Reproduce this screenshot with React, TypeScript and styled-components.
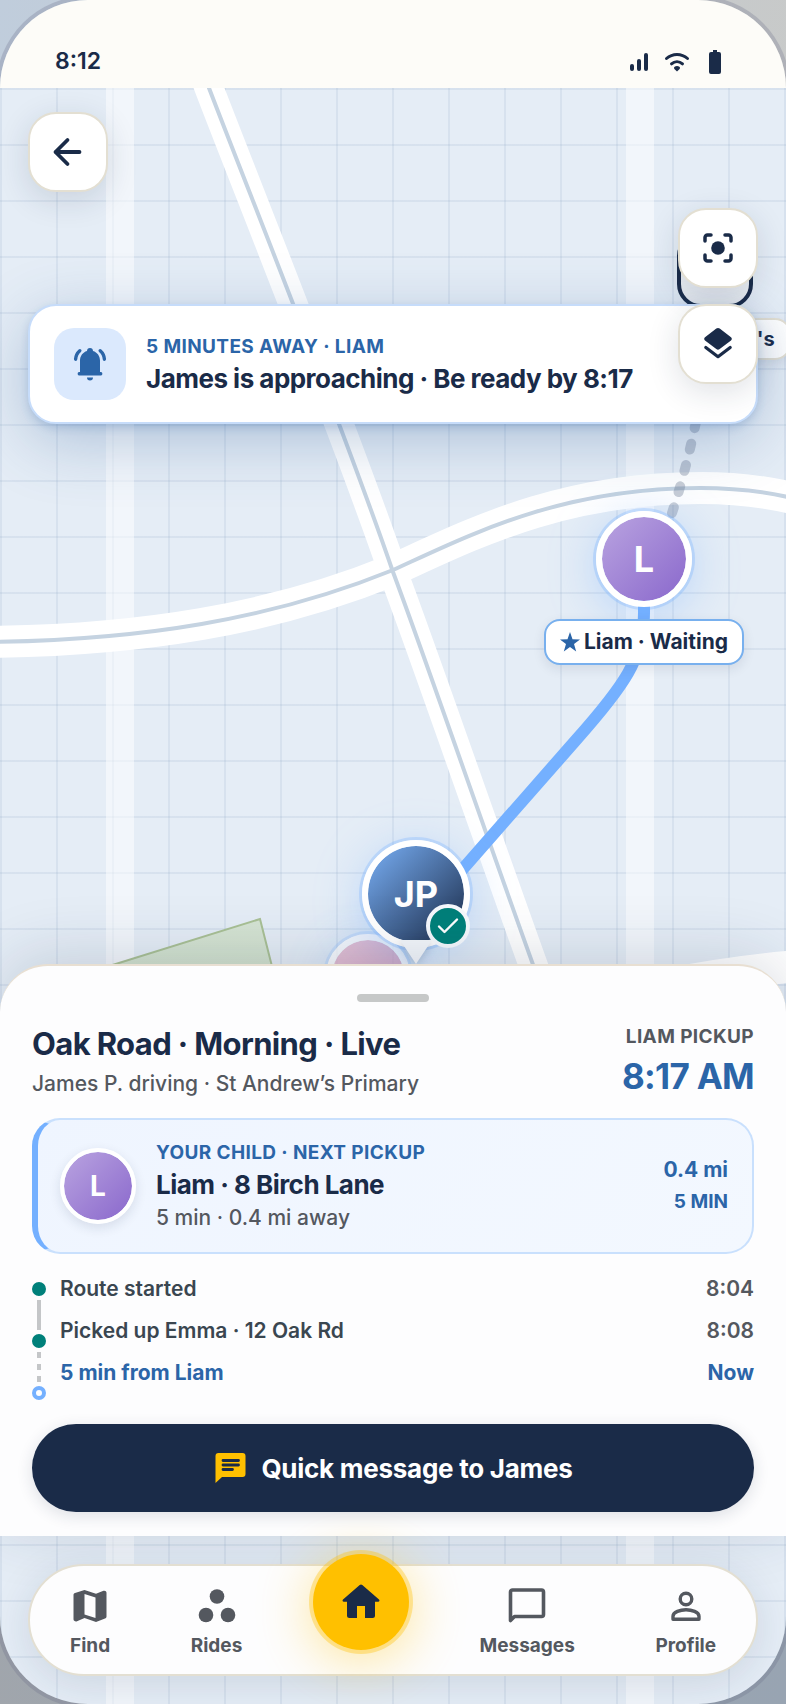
import type { ReactNode } from 'react';
import styled, { createGlobalStyle, css } from 'styled-components';

const NAVY = '#1a2b48';
const BLUE = '#2b65a8';
const SKY = '#74b0ff';
const GREY = '#54585f';
const TEAL = '#00807a';
const SAND = '#e3dfd2';

const GlobalStyle = createGlobalStyle`
  *, *::before, *::after {
    box-sizing: border-box;
  }
  body {
    margin: 0;
    font-family: Inter, 'Liberation Sans', sans-serif;
    color: ${NAVY};
    background: linear-gradient(100deg, #c0cddc 0%, #c9c9c6 100%) top / 100% 50% no-repeat,
      linear-gradient(100deg, #a3a6aa 0%, #98a4b2 100%);
  }
  button, a {
    font-family: inherit;
    color: inherit;
  }
  h1, h2, p, ul, ol {
    margin: 0;
    padding: 0;
  }
`;

const Phone = styled.div`
  display: flex;
  flex-direction: column;
  min-height: 100vh;
  overflow: hidden;
  border-radius: 88px;
  box-shadow: 0 0 0 4px rgba(100, 105, 130, 0.25);
`;

const StatusBar = styled.header`
  display: flex;
  align-items: center;
  justify-content: space-between;
  height: 88px;
  padding: 33px 57px 0 55px;
  background: #fdfcf8;
  font-size: 23px;
  font-weight: 600;
`;

const StatusIcons = styled.div`
  display: flex;
  gap: 10px;
`;

const MapArea = styled.main`
  position: relative;
  flex: 1;
  display: flex;
  flex-direction: column;
  overflow: hidden;
  background: #e5edf6;
`;

const MapCanvas = styled.div`
  position: absolute;
  inset: 0;
  background-image: linear-gradient(rgba(150, 175, 200, 0.18) 2px, transparent 2px),
    linear-gradient(90deg, rgba(150, 175, 200, 0.18) 2px, transparent 2px);
  background-size: 56px 56px;

  svg {
    display: block;
  }
`;

const Pin = styled.div<{ $x: number; $y: number; $size: number; $faded?: boolean }>`
  position: absolute;
  left: ${(p) => p.$x}px;
  top: ${(p) => p.$y}px;
  display: flex;
  align-items: center;
  justify-content: center;
  width: ${(p) => p.$size}px;
  height: ${(p) => p.$size}px;
  margin: ${(p) => -p.$size / 2}px;
  opacity: ${(p) => (p.$faded ? 0.7 : 1)};
`;

const tones = {
  violet: 'linear-gradient(135deg, #b9a3e0, #8a68cc)',
  driver: 'linear-gradient(135deg, #74a8ec 5%, #1a2b48 100%)',
  rose: 'linear-gradient(135deg, #e8b4cc, #c880a4)',
};

const Avatar = styled.div<{ $tone: keyof typeof tones; $size?: number; $live?: boolean }>`
  display: flex;
  flex: none;
  align-items: center;
  justify-content: center;
  width: ${(p) => p.$size ?? 76}px;
  height: ${(p) => p.$size ?? 76}px;
  border: ${(p) => (p.$live ? 6 : 4)}px solid #fff;
  border-radius: 50%;
  color: #fff;
  font-size: ${(p) => (p.$live ? 36 : 28)}px;
  font-weight: 700;
  background: ${(p) => tones[p.$tone]} padding-box;
  box-shadow: ${(p) =>
    p.$live
      ? '0 0 0 3px rgba(116, 176, 255, 0.3), 0 8px 48px rgba(116, 176, 255, 0.4)'
      : '0 4px 12px rgba(26, 43, 72, 0.12)'};
`;

const PinTail = styled.svg`
  position: absolute;
  top: 100px;
  filter: drop-shadow(0 2px 4px rgba(26, 43, 72, 0.2));
`;

const VerifiedBadge = styled.span`
  position: absolute;
  right: 0;
  bottom: 0;
  display: flex;
  align-items: center;
  justify-content: center;
  width: 44px;
  height: 44px;
  border: 4px solid #f6f9fd;
  border-radius: 50%;
  color: #fff;
  background: ${TEAL};
`;

const SchoolBox = styled.div`
  width: 76px;
  height: 76px;
  border: 4px solid ${NAVY};
  border-radius: 24px;
  background: #eef1f5;
`;

const PinLabel = styled.div<{ $top: number; $accent?: boolean }>`
  position: absolute;
  top: ${(p) => p.$top}px;
  display: flex;
  align-items: center;
  gap: 4px;
  padding: 0 14px;
  border: 2px solid ${(p) => (p.$accent ? '#78b0ee' : SAND)};
  border-radius: 16px;
  font-size: ${(p) => (p.$accent ? 21 : 20)}px;
  font-weight: 700;
  line-height: ${(p) => (p.$accent ? 42 : 38)}px;
  white-space: nowrap;
  background: #fff;
  box-shadow: 0 4px 12px rgba(26, 43, 72, 0.1);
`;

const MapButton = styled.button`
  display: flex;
  flex: none;
  align-items: center;
  justify-content: center;
  width: 80px;
  height: 80px;
  padding: 0;
  border: 2px solid ${SAND};
  border-radius: 28px;
  color: ${NAVY};
  background: #fff;
  box-shadow: 0 8px 32px rgba(26, 43, 72, 0.14);
  cursor: pointer;
`;

const TopBar = styled.div`
  position: relative;
  display: flex;
  padding: 24px 28px 0;
`;

const MapControls = styled.div`
  position: absolute;
  top: 120px;
  right: 28px;
  z-index: 2;
  display: flex;
  flex-direction: column;
  gap: 16px;
`;

const Alert = styled.section`
  position: relative;
  display: flex;
  align-items: center;
  gap: 20px;
  margin: 112px 28px auto;
  padding: 22px 24px;
  border: 2px solid #c6dcfa;
  border-radius: 28px;
  background: #fff;
  box-shadow: 0 4px 8px rgba(43, 101, 168, 0.2), 0 16px 64px rgba(43, 90, 150, 0.3);
`;

const AlertIcon = styled.div`
  display: flex;
  flex: none;
  align-items: center;
  justify-content: center;
  width: 72px;
  height: 72px;
  border-radius: 20px;
  color: ${BLUE};
  background: #dbe9fd;
`;

const Eyebrow = styled.p<{ $muted?: boolean }>`
  color: ${(p) => (p.$muted ? GREY : BLUE)};
  font-size: 19px;
  font-weight: 700;
  line-height: 30px;
  letter-spacing: 0.02em;
  text-transform: uppercase;
`;

const ItemTitle = styled.h2`
  font-size: 26px;
  font-weight: 700;
  line-height: 34px;
  letter-spacing: -0.02em;
`;

const Sheet = styled.section`
  position: relative;
  display: flex;
  flex-direction: column;
  padding: 28px 32px 24px;
  border-top: 2px solid #e8dfd2;
  border-radius: 48px 48px 0 0;
  background: #fdfdfe;
  box-shadow: 0 -8px 64px rgba(26, 43, 72, 0.16);
`;

const Handle = styled.div`
  align-self: center;
  width: 72px;
  height: 8px;
  border-radius: 4px;
  background: #c6c8c8;
`;

const SheetHeader = styled.div`
  display: flex;
  justify-content: space-between;
  margin-top: 20px;
`;

const RouteTitle = styled.h1`
  margin-bottom: 2px;
  font-size: 31px;
  font-weight: 700;
  line-height: 44px;
  letter-spacing: -0.02em;
`;

const Muted = styled.p`
  color: ${GREY};
  font-size: 21px;
  font-weight: 500;
  line-height: 32px;
`;

const Eta = styled.div`
  text-align: right;
`;

const EtaTime = styled.p`
  color: ${BLUE};
  font-size: 35px;
  font-weight: 700;
  line-height: 48px;
  letter-spacing: -0.02em;
`;

const ChildCard = styled.section`
  display: flex;
  align-items: center;
  gap: 20px;
  margin-top: 18px;
  padding: 18px 24px 18px 22px;
  border: 2px solid #c9e0fd;
  border-left: 6px solid ${SKY};
  border-radius: 28px;
  background: linear-gradient(135deg, #eff5ff, #f3f8ff);
`;

const ChildInfo = styled.div`
  flex: 1;
`;

const Distance = styled.p<{ $small?: boolean }>`
  color: ${BLUE};
  font-size: ${(p) => (p.$small ? 19 : 21)}px;
  font-weight: 700;
  line-height: 32px;
  text-align: right;
`;

const Progress = styled.div`
  display: flex;
  gap: 14px;
  margin-top: 14px;
`;

const Rail = styled.div`
  display: flex;
  flex-direction: column;
  align-items: center;
  gap: 4px;
  width: 14px;
  padding: 14px 0 8px;
`;

const Dot = styled.span<{ $next?: boolean }>`
  flex: none;
  width: 14px;
  height: 14px;
  border: ${(p) => (p.$next ? `4px solid ${SKY}` : `7px solid ${TEAL}`)};
  border-radius: 50%;
`;

const Segment = styled.span<{ $dashed?: boolean }>`
  flex: none;
  width: 4px;
  height: 30px;
  background: ${(p) =>
    p.$dashed
      ? 'repeating-linear-gradient(#c4c6c8 0 6px, transparent 6px 12px)'
      : '#c4c6c8'};
`;

const Steps = styled.ol`
  flex: 1;
  list-style: none;
`;

const Step = styled.li<{ $current?: boolean }>`
  display: flex;
  justify-content: space-between;
  color: #3a4650;
  font-size: 21px;
  font-weight: 600;
  line-height: 42px;

  time {
    color: ${GREY};
  }

  ${(p) =>
    p.$current &&
    css`
      &,
      time {
        color: ${BLUE};
        font-weight: 700;
      }
    `}
`;

const MessageButton = styled.button`
  display: flex;
  align-items: center;
  justify-content: center;
  gap: 12px;
  height: 88px;
  margin-top: 16px;
  border: 0;
  border-radius: 44px;
  color: #fff;
  font-size: 26px;
  font-weight: 700;
  letter-spacing: -0.01em;
  background: ${NAVY};
  box-shadow: 0 4px 16px rgba(26, 43, 72, 0.14);
  cursor: pointer;
`;

const NavBar = styled.nav`
  position: relative;
  display: flex;
  justify-content: space-between;
  margin: 28px;
  padding: 0 30px;
  border: 2px solid ${SAND};
  border-radius: 56px;
  background: #fdfdfe;
  box-shadow: 0 8px 40px rgba(26, 43, 72, 0.12);
`;

const NavItem = styled.a`
  display: flex;
  flex-direction: column;
  align-items: center;
  gap: 6px;
  padding: 20px 10px 14px;
  color: ${GREY};
  font-size: 19px;
  font-weight: 700;
  line-height: 28px;
  text-decoration: none;
`;

const HomeButton = styled.a`
  display: flex;
  align-items: center;
  justify-content: center;
  width: 96px;
  height: 96px;
  margin-top: -12px;
  border-radius: 50%;
  color: ${NAVY};
  background: #ffc000;
  box-shadow: 0 0 0 4px rgba(255, 192, 0, 0.35), 0 8px 56px rgba(255, 192, 0, 0.45);
`;

const Icon = ({ size = 40, children }: { size?: number; children: ReactNode }) => (
  <svg
    width={size}
    height={size}
    viewBox={`0 0 ${size} ${size}`}
    fill="currentColor"
    aria-hidden="true"
  >
    {children}
  </svg>
);

const stroke = {
  fill: 'none',
  stroke: 'currentColor',
  strokeLinecap: 'round',
  strokeLinejoin: 'round',
} as const;

const SignalIcon = () => (
  <Icon size={28}>
    <rect x="5" y="17" width="4" height="7" rx="2" />
    <rect x="12" y="12" width="4" height="12" rx="2" />
    <rect x="19" y="6" width="4" height="18" rx="2" />
  </Icon>
);

const WifiIcon = () => (
  <Icon size={28}>
    <path {...stroke} strokeWidth="3" d="M3.500 11.500C9.500 6 18.500 6 24.500 11.500" />
    <path {...stroke} strokeWidth="3" d="M8.500 16.800c3.200-2.900 7.800-2.900 11 0" />
    <path d="M14 24.500l-2.600-2.600a1.500 1.500 0 0 1 .2-2.200c1.500-1 3.300-1 4.800 0a1.500 1.500 0 0 1 .2 2.200z" />
  </Icon>
);

const BatteryIcon = () => (
  <Icon size={28}>
    <path d="M12 3h4v2h2a2 2 0 0 1 2 2V25a2 2 0 0 1-2 2H10a2 2 0 0 1-2-2V7a2 2 0 0 1 2-2h2z" />
  </Icon>
);

const BackIcon = () => (
  <Icon>
    <path {...stroke} strokeWidth="3.800" d="M31.500 20H7.500M19.500 8L7.500 20l12 12" />
  </Icon>
);

const FocusIcon = () => (
  <Icon>
    <circle cx="20" cy="20" r="6.800" />
    <path
      {...stroke}
      strokeWidth="3.500"
      d="M7 13V9.500A2.500 2.500 0 0 1 9.500 7H13M27 7h3.500A2.500 2.500 0 0 1 33 9.500V13M33 27v3.500a2.500 2.500 0 0 1-2.500 2.500H27M13 33H9.500A2.500 2.500 0 0 1 7 30.500V27"
    />
  </Icon>
);

const LayersIcon = () => (
  <Icon>
    <path d="M18.300 4.600a2.800 2.800 0 0 1 3.400 0L33 13.200a2 2 0 0 1 0 3.200L21.700 25a2.800 2.800 0 0 1-3.400 0L7 16.400a2 2 0 0 1 0-3.200z" />
    <path {...stroke} strokeWidth="3.200" d="M7.800 23.500L20 32.700l12.200-9.200" />
  </Icon>
);

const BellIcon = () => (
  <Icon>
    <path d="M20 4a3 3 0 0 1 3 2.900c4.300 1.300 7 5 7 9.600V28h1a1.800 1.800 0 0 1 0 3.500H9A1.800 1.800 0 0 1 9 28h1V16.500c0-4.600 2.700-8.300 7-9.600A3 3 0 0 1 20 4zM17 33.500h6a3 3 0 0 1-6 0z" />
    <path {...stroke} strokeWidth="3.400" d="M9.800 6.700c-2.500 2.200-4 5-4.200 8.500M30.200 6.700c2.500 2.200 4 5 4.200 8.500" />
  </Icon>
);

const ChatIcon = () => (
  <Icon size={36}>
    <path fill="#ffc000" d="M5.500 3h24A3 3 0 0 1 32.500 6v18a3 3 0 0 1-3 3H9l-6.500 6V6a3 3 0 0 1 3-3z" />
    <path {...stroke} stroke={NAVY} strokeWidth="2.800" d="M10 10.500h15.500M10 15h15.500M10 19.500h9.500" />
  </Icon>
);

const StarIcon = () => (
  <Icon size={20}>
    <path
      fill={BLUE}
      d="M10 0l2.500 7.200 7.500.2-6 4.700 2.200 7.400L10 15.100l-6.200 4.400L6 12.100 0 7.400l7.500-.2z"
    />
  </Icon>
);

const MapIcon = () => (
  <Icon>
    <path
      fillRule="evenodd"
      d="M14.500 4L26 7.800l7.500-3c1.600-.5 3 .5 3 2V30.500c0 1-.6 1.700-1.500 2L26 36l-11.500-4-7.500 3.200c-1.600.6-3.500-.4-3.500-2V9c0-1 .6-1.700 1.500-2zM14.500 8v20.500L25.500 32V11.500z"
    />
  </Icon>
);

const RidesIcon = () => (
  <Icon>
    <circle cx="20" cy="10.500" r="7.300" />
    <circle cx="9" cy="29" r="7.300" />
    <circle cx="31" cy="29" r="7.300" />
  </Icon>
);

const HomeIcon = () => (
  <Icon>
    <path d="M18.700 3a2 2 0 0 1 2.600 0L38 17.500c.9.900.4 2.200-.8 2.200H34V33.500a2.500 2.500 0 0 1-2.500 2.500H24V24h-8v12H8.500A2.500 2.500 0 0 1 6 33.500V19.700H2.800c-1.200 0-1.700-1.300-.8-2.200z" />
  </Icon>
);

const MessagesIcon = () => (
  <Icon>
    <path {...stroke} strokeWidth="3.600" d="M3.500 34.500V6a2 2 0 0 1 2-2h29a2 2 0 0 1 2 2v22.500a2 2 0 0 1-2 2h-27z" />
  </Icon>
);

const ProfileIcon = () => (
  <Icon>
    <circle {...stroke} cx="20" cy="13" r="5.800" strokeWidth="3.400" />
    <path
      {...stroke}
      strokeWidth="3.400"
      d="M7 33.300v-3C7 26 14.500 23.700 20 23.700S33 26 33 30.300v3z"
    />
  </Icon>
);

const CheckIcon = () => (
  <Icon size={28}>
    <path {...stroke} strokeWidth="2.400" d="M5 14.500l5.500 5.500L23 7.500" />
  </Icon>
);

const DIAGONAL = 'M198 -30L209 0C248 102 340 330 393 484C430 583 480 730 540 896L560 950';
const ARC = 'M-10 554C140 552 270 532 393 482C470 447 560 400 700 400C740 400 770 404 800 412';

const Streets = () => (
  <svg width="100%" height="100%" aria-hidden="true">
    <defs>
      <linearGradient id="park" x1="0" y1="0" x2="0" y2="1">
        <stop offset="0" stopColor="#d6e4d4" />
        <stop offset="1" stopColor="#c9dcc2" />
      </linearGradient>
    </defs>
    <path d="M120 0V1620M640 0V1620" stroke="#fff" strokeOpacity="0.5" strokeWidth="28" />
    <path
      d="M90 884L260 831L280 910L90 960z"
      fill="url(#park)"
      stroke="#a9c095"
      strokeWidth="2"
    />
    <g fill="none" stroke="#fff">
      <path d={ARC} strokeWidth="32" />
      <path d={DIAGONAL} strokeWidth="29" />
      <path d="M560 922Q690 886 800 878" strokeWidth="32" />
    </g>
    <g fill="none" stroke="#c5d3e1" strokeWidth="4">
      <path d={ARC} />
      <path d={DIAGONAL} />
    </g>
    <g fill="none" strokeLinecap="round">
      <path
        d="M672 425Q700 340 714 220"
        stroke="#64748b"
        strokeOpacity="0.35"
        strokeWidth="10"
        strokeDasharray="6 16"
      />
      <path
        d="M644 470V525C644 570 624 598 576 652L440 807"
        stroke={SKY}
        strokeWidth="12"
      />
    </g>
  </svg>
);

const steps = [
  { label: 'Route started', time: '8:04' },
  { label: 'Picked up Emma · 12 Oak Rd', time: '8:08' },
  { label: '5 min from Liam', time: 'Now', current: true },
];

const MapPins = () => (
  <>
    <Pin $x={715} $y={182} $size={76}>
      <SchoolBox />
      <PinLabel $top={86}>St Andrew&#39;s</PinLabel>
    </Pin>
    <Pin $x={368} $y={888} $size={84} $faded>
      <Avatar $tone="rose" $size={84} $live />
    </Pin>
    <Pin $x={644} $y={471} $size={96}>
      <Avatar $tone="violet" $size={96} $live>
        L
      </Avatar>
      <PinLabel $top={108} $accent>
        <StarIcon />
        Liam · Waiting
      </PinLabel>
    </Pin>
    <Pin $x={416} $y={806} $size={108}>
      <PinTail width="32" height="24" aria-hidden="true">
        <path d="M0 0h32L16 24z" fill="#f4f7fb" />
      </PinTail>
      <Avatar $tone="driver" $size={108} $live>
        JP
      </Avatar>
      <VerifiedBadge>
        <CheckIcon />
      </VerifiedBadge>
    </Pin>
  </>
);

const RideSheet = () => (
  <Sheet>
    <Handle />
    <SheetHeader>
      <div>
        <RouteTitle>Oak Road · Morning · Live</RouteTitle>
        <Muted>James P. driving · St Andrew’s Primary</Muted>
      </div>
      <Eta>
        <Eyebrow $muted>Liam pickup</Eyebrow>
        <EtaTime>8:17 AM</EtaTime>
      </Eta>
    </SheetHeader>

    <ChildCard>
      <Avatar $tone="violet">L</Avatar>
      <ChildInfo>
        <Eyebrow>Your child · Next pickup</Eyebrow>
        <ItemTitle>Liam · 8 Birch Lane</ItemTitle>
        <Muted>5 min · 0.4 mi away</Muted>
      </ChildInfo>
      <div>
        <Distance>0.4 mi</Distance>
        <Distance $small>5 MIN</Distance>
      </div>
    </ChildCard>

    <Progress>
      <Rail>
        <Dot />
        <Segment />
        <Dot />
        <Segment $dashed />
        <Dot $next />
      </Rail>
      <Steps>
        {steps.map(({ label, time, current }) => (
          <Step key={label} $current={current}>
            <span>{label}</span>
            <time>{time}</time>
          </Step>
        ))}
      </Steps>
    </Progress>

    <MessageButton type="button">
      <ChatIcon />
      Quick message to James
    </MessageButton>
  </Sheet>
);

const App = () => (
  <>
    <GlobalStyle />
    <Phone>
      <StatusBar>
        <time>8:12</time>
        <StatusIcons>
          <SignalIcon />
          <WifiIcon />
          <BatteryIcon />
        </StatusIcons>
      </StatusBar>

      <MapArea>
        <MapCanvas>
          <Streets />
          <MapPins />
        </MapCanvas>

        <TopBar>
          <MapButton type="button" aria-label="Back">
            <BackIcon />
          </MapButton>
        </TopBar>
        <MapControls>
          <MapButton type="button" aria-label="Center map">
            <FocusIcon />
          </MapButton>
          <MapButton type="button" aria-label="Map layers">
            <LayersIcon />
          </MapButton>
        </MapControls>

        <Alert>
          <AlertIcon>
            <BellIcon />
          </AlertIcon>
          <div>
            <Eyebrow>5 minutes away · Liam</Eyebrow>
            <ItemTitle>James is approaching · Be ready by 8:17</ItemTitle>
          </div>
        </Alert>

        <RideSheet />

        <NavBar>
          <NavItem href="#find">
            <MapIcon />
            Find
          </NavItem>
          <NavItem href="#rides">
            <RidesIcon />
            Rides
          </NavItem>
          <HomeButton href="#home" aria-label="Home">
            <HomeIcon />
          </HomeButton>
          <NavItem href="#messages">
            <MessagesIcon />
            Messages
          </NavItem>
          <NavItem href="#profile">
            <ProfileIcon />
            Profile
          </NavItem>
        </NavBar>
      </MapArea>
    </Phone>
  </>
);

export default App;
